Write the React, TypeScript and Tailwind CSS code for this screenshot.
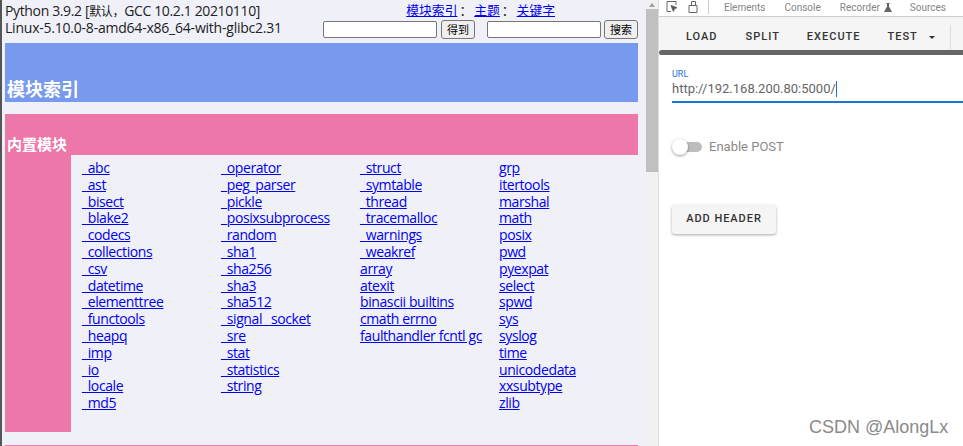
const cols = [
  ["_abc","_ast","_bisect","_blake2","_codecs","_collections","_csv","_datetime","_elementtree","_functools","_heapq","_imp","_io","_locale","_md5"],
  ["_operator","_peg_parser","_pickle","_posixsubprocess","_random","_sha1","_sha256","_sha3","_sha512","_signal _socket","_sre","_stat","_statistics","_string"],
  ["_struct","_symtable","_thread","_tracemalloc","_warnings","_weakref","array","atexit","binascii builtins","cmath errno","faulthandler fcntl gc"],
  ["grp","itertools","marshal","math","posix","pwd","pyexpat","select","spwd","sys","syslog","time","unicodedata","xxsubtype","zlib"],
];
export default function App() {
  return (
    <div className="relative flex w-[963px] h-[446px] overflow-hidden bg-white font-['Open_Sans','Noto_Sans_CJK_SC',sans-serif]">
      <div className="w-[646px] h-full flex-none flex flex-col bg-[#f0f0f8] border-l-2 border-[#555555] pl-[3px] pr-[8px] text-[14px] leading-[17px] text-[#222222] overflow-hidden">
        <div className="flex justify-between h-[43px] pt-[2px]">
          <div className="tracking-[-0.22px]">
            <div className="tracking-[-0.36px]">Python 3.9.2 [<span className="text-[12px]">默认，</span>GCC 10.2.1 20210110]</div>
            <div className="-mt-px">Linux-5.10.0-8-amd64-x86_64-with-glibc2.31</div>
          </div>
          <div className="flex flex-col items-end">
            <div className="mr-[83px] text-[12.8px] whitespace-nowrap"><a className="text-[#0000ee] underline">模块索引</a><span className="mx-[2px]">：</span><a className="text-[#0000ee] underline">主题</a><span className="mx-[2px]">：</span><a className="text-[#0000ee] underline">关键字</a></div>
            <div className="flex items-center h-[20px] text-[11px] text-black">
              <div className="w-[114px] h-[17px] bg-white border border-[#767676] rounded-[2px]" />
              <div className="ml-[4px] w-[34px] h-[19px] bg-[#efefef] border border-[#767676] rounded-[3px] flex items-center justify-center">得到</div>
              <div className="w-[114px] h-[17px] bg-white border border-[#767676] rounded-[2px] ml-[12px]" />
              <div className="ml-[3px] w-[34px] h-[19px] bg-[#efefef] border border-[#767676] rounded-[3px] flex items-center justify-center">搜索</div>
            </div>
          </div>
        </div>
        <div className="h-[59px] flex-none bg-[#7799ee] flex items-end pl-[2px] pb-[1px] text-white text-[18px] leading-[24px] font-bold">模块索引</div>
        <div className="h-[41px] flex-none mt-[12px] bg-[#ee77aa] flex items-end pl-[2px] text-white text-[15px] leading-[22px] font-bold">内置模块</div>
        <div className="flex h-[277px] flex-none">
          <div className="w-[66px] bg-[#ee77aa] flex-none" />
          <div className="flex pl-[11px] pt-[4px] text-[#0000ee] underline tracking-[-0.4px]">
            {cols.map((c, i) => (
              <div key={i} className="w-[139px] flex-none flex flex-col">
                {c.map((m) => <a key={m} className="h-[16.8px] whitespace-nowrap">{m}</a>)}
              </div>
            ))}
          </div>
        </div>
        <div className="mt-[13px] h-px w-[633px] flex-none bg-[#ee77aa]" />
      </div>
      <div className="w-[13px] flex-none bg-[#f1f1f1] flex flex-col items-center border-r border-[#dddddd]">
        <div className="h-[9px] flex items-center justify-center"><div className="w-0 h-0 border-x-[3px] border-x-transparent border-b-[4px] border-b-[#a0a0a0]" /></div>
        <div className="w-[12px] h-[163px] bg-[#c0c0c0]" />
      </div>
      <div className="flex-1 flex flex-col bg-white min-w-0">
        <div className="h-[17px] flex-none flex items-center pb-[2px] bg-white border-b border-[#cccccc] text-[10px] text-[#858585] font-['Roboto',sans-serif] whitespace-nowrap overflow-hidden">
          <div className="flex items-center gap-[10px] pl-[7px] pr-[15px] h-full border-r border-[#cccccc] w-[50px]">
            <svg width="12" height="12" viewBox="0 0 12 12" fill="none" stroke="#666" strokeWidth="1" className="flex-none"><path d="M5 10.500H1V0.500h9V4"/><path d="M5 4.500l6 2.200-2.600 1-1 2.700z" fill="#555"/></svg>
            <svg width="10" height="12" viewBox="0 0 10 12" fill="none" stroke="#666" strokeWidth="1" className="flex-none"><path d="M1 4.500h8v7H1zM3.500 4.500V0.500h4v4"/></svg>
          </div>
          <span className="ml-[15px]">Elements</span>
          <span className="ml-[19px]">Console</span>
          <span className="ml-[19px] flex items-center gap-[4px]">Recorder
            <svg width="8" height="9" viewBox="0 0 8 9" fill="#666"><path d="M2.500 0h3v1h-.5v2.500L8 9H0l3-5.500V1h-.5z"/></svg>
          </span>
          <span className="ml-[18px]">Sources</span>
        </div>
        <div className="h-[33px] flex-none bg-[#f5f5f5] flex items-center pl-[27px] pt-[7px] text-[11px] font-medium text-[#333333] tracking-[1px] font-['Roboto',sans-serif] whitespace-nowrap overflow-hidden">
          <span>LOAD</span>
          <span className="ml-[28px]">SPLIT</span>
          <span className="ml-[27px]">EXECUTE</span>
          <span className="ml-[27px]">TEST</span>
          <div className="ml-[11px] w-0 h-0 border-x-[3px] border-x-transparent border-t-[3px] border-t-[#333333]" />
          <div className="ml-[15px] w-px h-[25px] bg-[#dddddd]" />
          <div className="ml-[13px] w-px h-[6px] bg-[#b08a60]" />
        </div>
        <div className="h-[5px] flex-none bg-[#666666] rounded-l-[3px]" />
        <div className="flex-1 pl-[13px] font-['Roboto',sans-serif]">
          <div className="mt-[14px] h-[34px] border-b-2 border-[#1976d2]">
            <div className="text-[9px] leading-[10px] text-[#1976d2]">URL</div>
            <div className="flex items-center text-[13px] leading-[19px] text-[#666666]">http://192.168.200.80:5000/<span className="w-px h-[16px] bg-[#1976d2]" /></div>
          </div>
          <div className="mt-[34px] flex items-center h-[20px]">
            <div className="relative w-[30px] h-[14px] flex items-center">
              <div className="ml-[3px] w-[28px] h-[10px] rounded-full bg-[#bdbdbd]" />
              <div className="absolute left-0 w-[16px] h-[16px] rounded-full bg-white shadow-[0_1px_3px_rgba(0,0,0,0.4)]" />
            </div>
            <span className="ml-[7px] text-[13px] text-[#8a8a8a]">Enable POST</span>
          </div>
          <button className="mt-[48px] block w-[104px] h-[29px] bg-[#f5f5f5] rounded-[3px] shadow-[0_1px_3px_rgba(0,0,0,0.35)] text-[11px] font-medium tracking-[0.95px] text-[#333333]">ADD HEADER</button>
        </div>
      </div>
      <div className="absolute left-[809px] top-[417px] text-[18px] leading-[20px] text-[#8a8a8a] font-['Liberation_Sans',sans-serif]">CSDN @AlongLx</div>
    </div>
  );
}
